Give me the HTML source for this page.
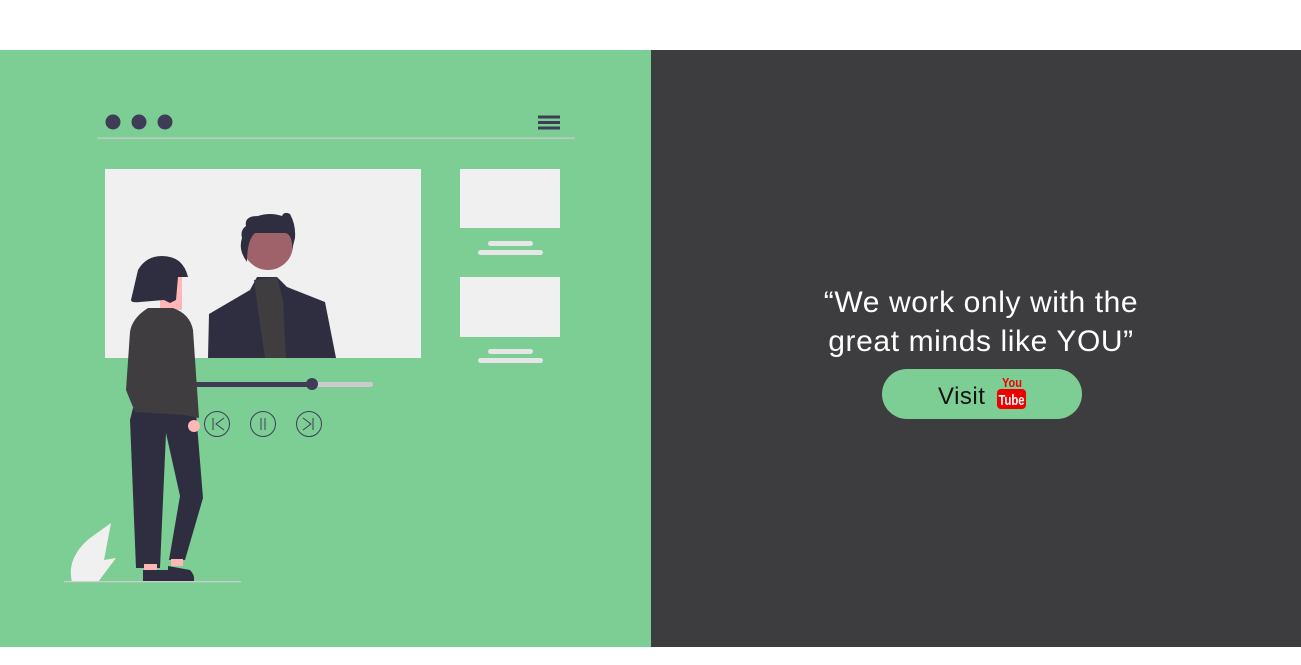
<!DOCTYPE html>
<html><head><meta charset="utf-8"><style>
body{margin:0;width:1301px;height:665px;background:#fff;position:relative;overflow:hidden;font-family:"Liberation Sans",sans-serif}
.l{position:absolute;left:0;top:50px;width:651px;height:597px;background:#7dce94}
.r{position:absolute;left:651px;top:50px;width:650px;height:597px;background:#3d3c3f}
.q{position:absolute;left:651px;width:660px;top:283px;text-align:center;color:#fff;font-size:30px;line-height:39px;letter-spacing:0.6px}
.b{position:absolute;left:882px;top:369px;width:200px;height:50px;border-radius:25px;background:#7dce94}
.v{position:absolute;left:938px;top:383px;font-size:24px;color:#111;letter-spacing:0.5px}
</style></head><body>
<div class="l"></div><div class="r"></div>
<svg style="position:absolute;left:0;top:0" width="651" height="665">
<circle cx="113" cy="122" r="7.5" fill="#3f3d56"/><circle cx="139" cy="122" r="7.5" fill="#3f3d56"/><circle cx="165" cy="122" r="7.5" fill="#3f3d56"/>
<rect x="538" y="115.5" width="22" height="3" fill="#3f3d56"/><rect x="538" y="121" width="22" height="3" fill="#3f3d56"/><rect x="538" y="126.5" width="22" height="3" fill="#3f3d56"/>
<rect x="97" y="137.5" width="478" height="1.3" fill="#ccc"/>
<rect x="105" y="169" width="316" height="189" fill="#f0f0f0"/>
<rect x="460" y="169" width="100" height="59" fill="#f0f0f0"/>
<rect x="460" y="277" width="100" height="60" fill="#f0f0f0"/>
<rect x="488" y="241" width="45" height="5" rx="2.5" fill="#e6e6e6"/><rect x="478" y="250" width="65" height="5" rx="2.5" fill="#e6e6e6"/>
<rect x="488" y="349" width="45" height="5" rx="2.5" fill="#e6e6e6"/><rect x="478" y="358" width="65" height="5" rx="2.5" fill="#e6e6e6"/>
<path d="M208 358 L209 314 L250 290 L257 277 L277 277 L287 287 L325 302 L336 358Z" fill="#2f2e41"/>
<path d="M254 280 L277 277 L283 300 L286 358 L265 358 L258 310Z" fill="#3f3d3f"/>
<circle cx="268" cy="245" r="25" fill="#9f616a"/>
<path d="M247 262 Q238 250 242 238 Q240 230 246 226 Q244 216 258 216 Q270 212 282 216 Q284 211 290 214 Q296 225 295 238 L292 250 Q293 236 286 233 L255 233 Q247 240 247 262Z" fill="#2f2e41"/>
<rect x="195" y="382" width="178" height="5" rx="2.5" fill="#ccc"/>
<rect x="195" y="382" width="117" height="5" rx="2.5" fill="#3f3d56"/>
<circle cx="312" cy="384" r="6" fill="#3f3d56"/>
<g fill="none" stroke="#3f3d56" stroke-width="1">
<circle cx="217" cy="424" r="12.5"/><circle cx="263" cy="424" r="12.5"/><circle cx="309" cy="424" r="12.5"/>
<path d="M213 418v12M224 418l-8 6 8 6M261 418v12M265 418v12M303 418l8 6-8 6M313 418v12"/></g>
<path d="M136 568 L130 420 L133 408 L196 412 L203 498 L185 560 L169 560 L180 496 L166 433 L160 568Z" fill="#2f2e41"/>
<rect x="144" y="564" width="13" height="6" fill="#ffb6b6"/><rect x="171" y="559" width="12" height="7" fill="#ffb6b6"/>
<path d="M143 570 H170 V582 H143Z M168 566 L190 570 Q195 575 194 581 L168 581Z" fill="#2f2e41"/>
<rect x="160" y="275" width="22" height="35" fill="#ffb6b6"/>
<path d="M130 332 Q132 318 148 308 L173 308 Q190 314 193 330 L199 418 L185 415 L135 412 L126 390Z" fill="#3f3d3f"/>
<circle cx="194" cy="426" r="6" fill="#ffb6b6"/>
<path d="M131 300 L138 270 Q146 256 162 256 Q183 256 188 277 L178 277 L176 300 L170 303 L164 300 L140 302 Q131 303 131 300Z" fill="#2f2e41"/>
<path d="M111 523 L104 560 L116 558 L98 582 L72 582 Q66 558 90 538Z" fill="#f0f0f0"/>
<rect x="64" y="581" width="177" height="1.3" fill="#ccc"/>
</svg>
<div class="q">“We work only with the<br>great minds like YOU”</div>
<div class="b"></div>
<div class="v">Visit</div>
<svg style="position:absolute;left:996px;top:374px" width="32" height="36">
<text x="16" y="13" text-anchor="middle" font-family="Liberation Sans Narrow,Liberation Sans,sans-serif" font-weight="bold" font-size="13" fill="#e00" textLength="20" lengthAdjust="spacingAndGlyphs">You</text>
<rect x="1" y="15" width="29" height="20" rx="4" fill="#e00"/>
<text x="15.5" y="31" text-anchor="middle" font-family="Liberation Sans Narrow,Liberation Sans,sans-serif" font-weight="bold" font-size="15" fill="#fff" textLength="26" lengthAdjust="spacingAndGlyphs">Tube</text>
</svg>
</body></html>
